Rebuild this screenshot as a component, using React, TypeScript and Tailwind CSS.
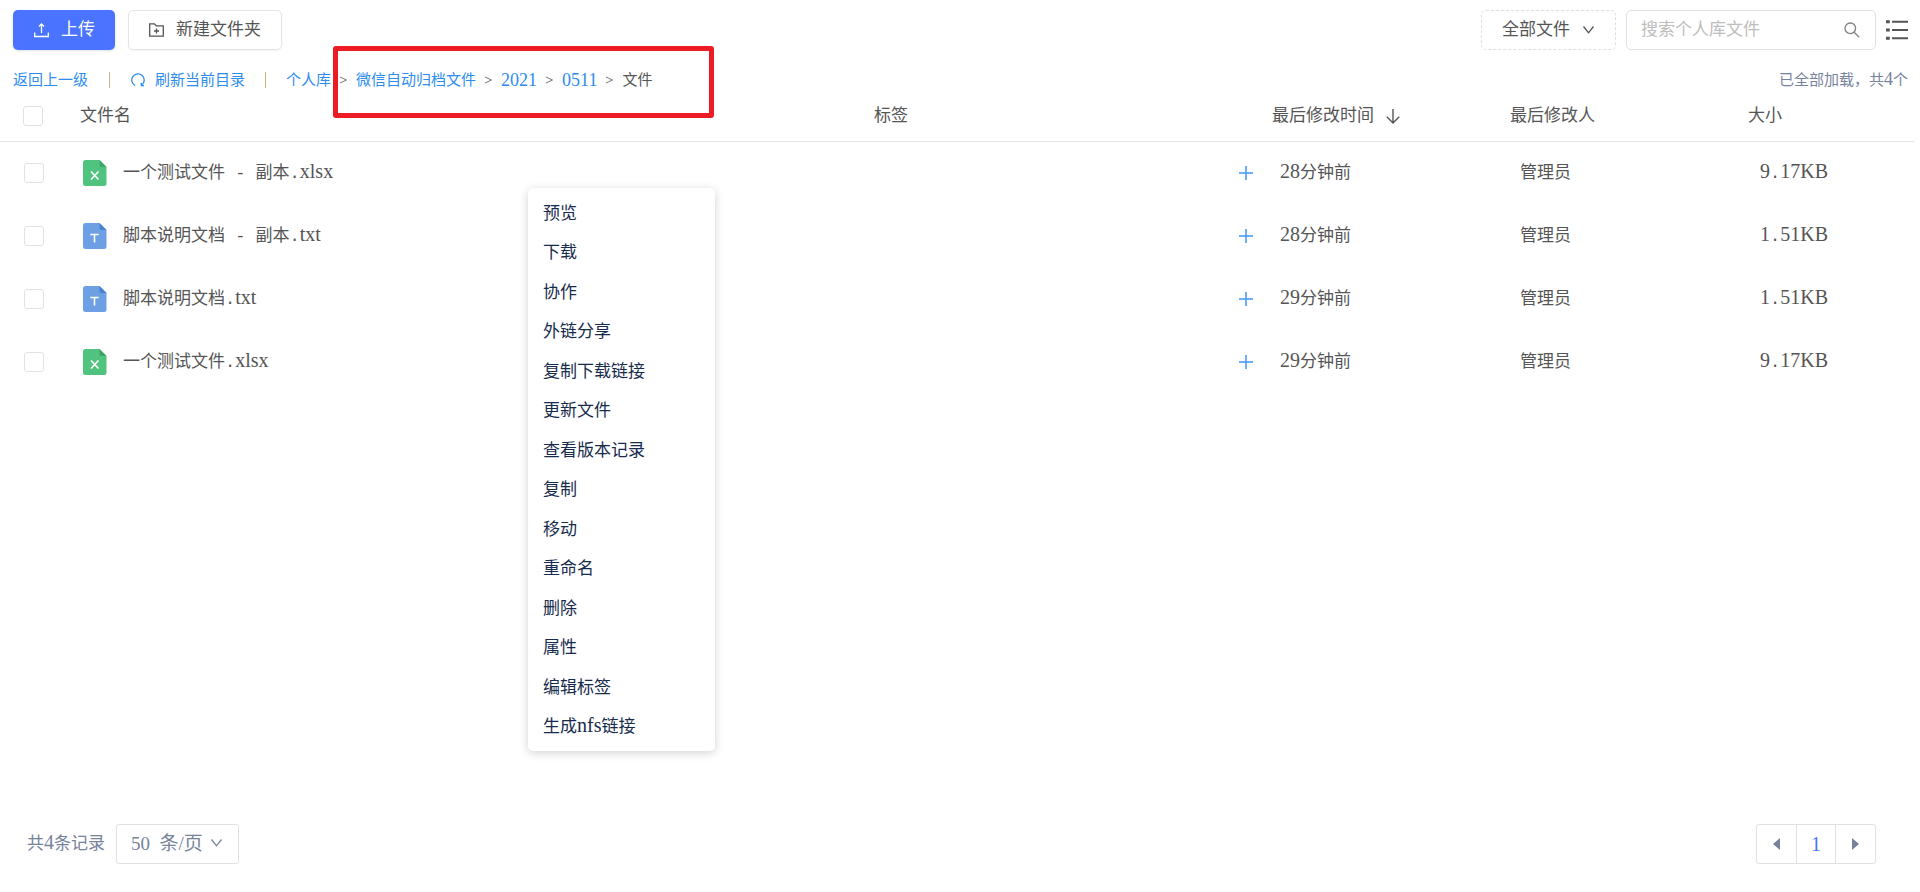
import { ReactNode } from "react";

type FileKind = "xlsx" | "txt";

type FileRow = {
  name: string;
  kind: FileKind;
  modified: string;
  owner: string;
  size: string;
};

const files: FileRow[] = [
  { name: "一个测试文件 - 副本.xlsx", kind: "xlsx", modified: "28分钟前", owner: "管理员", size: "9.17KB" },
  { name: "脚本说明文档 - 副本.txt", kind: "txt", modified: "28分钟前", owner: "管理员", size: "1.51KB" },
  { name: "脚本说明文档.txt", kind: "txt", modified: "29分钟前", owner: "管理员", size: "1.51KB" },
  { name: "一个测试文件.xlsx", kind: "xlsx", modified: "29分钟前", owner: "管理员", size: "9.17KB" },
];

const menuItems = [
  "预览",
  "下载",
  "协作",
  "外链分享",
  "复制下载链接",
  "更新文件",
  "查看版本记录",
  "复制",
  "移动",
  "重命名",
  "删除",
  "属性",
  "编辑标签",
  "生成nfs链接",
];

// Latin runs are set a little larger than the Chinese, spaces and dots are full cells
function Mixed({ children }: { children: string }) {
  const parts = children.split(/([A-Za-z0-9]+|[ .-]+)/).filter(Boolean);
  return (
    <>
      {parts.map((part, i) => {
        if (/^[A-Za-z0-9]/.test(part)) {
          return <span key={i} className="text-xl leading-none">{part}</span>;
        }
        if (/^[ .-]/.test(part)) {
          return <span key={i} className="font-['Liberation_Mono',monospace] whitespace-pre leading-none">{part}</span>;
        }
        return part;
      })}
    </>
  );
}

function FileIcon({ kind }: { kind: FileKind }) {
  const xlsx = kind === "xlsx";
  return (
    <svg width="24" height="26" viewBox="0 0 24 26" className="shrink-0" aria-hidden="true">
      <path d="M2.5 0H16.5L23.5 7V23.5A2.5 2.5 0 0 1 21 26H2.5A2.5 2.5 0 0 1 0 23.5V2.5A2.5 2.5 0 0 1 2.5 0Z" fill={xlsx ? "#50c37e" : "#6c9fe4"} />
      <path d="M16.5 0L23.5 7H18.5A2 2 0 0 1 16.5 5Z" fill={xlsx ? "#3ca467" : "#4a80cd"} />
      {xlsx ? (
        <path d="M8 11.5L15.5 19.5M15.5 11.5L8 19.5" stroke="#fff" strokeWidth="1.7" fill="none" />
      ) : (
        <path d="M7.3 11.5H15.7M11.5 11.5V19.5" stroke="#fff" strokeWidth="1.6" fill="none" />
      )}
    </svg>
  );
}

function Chevron({ className }: { className?: string }) {
  return (
    <svg width="13" height="10" viewBox="0 0 13 10" fill="none" stroke="currentColor" strokeWidth="1.3" className={className} aria-hidden="true">
      <path d="M1.5 1.5L6.5 7.8L11.5 1.5" />
    </svg>
  );
}

function Checkbox({ label }: { label: string }) {
  return (
    <input
      type="checkbox"
      aria-label={label}
      className="block size-5 appearance-none rounded-[3px] border border-[#e0e2e6] bg-white"
    />
  );
}

function Crumb({ children }: { children: ReactNode }) {
  return <a href="#" className="text-[#2d8cf0]">{children}</a>;
}

function Arrow() {
  return (
    <svg width="9" height="8" viewBox="0 0 9 8" fill="none" stroke="#777" strokeWidth="1" className="mx-2" aria-hidden="true">
      <path d="M1 1L7.5 4L1 7" />
    </svg>
  );
}

export default function App() {
  return (
    <div className="relative flex min-h-screen flex-col bg-white font-['Liberation_Serif','Noto_Sans_CJK_SC',serif] text-[17px] leading-6 text-[#555]">
      <header className="flex items-center justify-between pt-[10px] pr-3 pl-[13px]">
        <div className="flex gap-[13px]">
          <button className="flex h-10 items-center gap-3 rounded-[5px] bg-[#4a74ff] pr-5 pl-[21px] text-white shadow-sm">
            <svg width="15" height="15" viewBox="0 0 15 15" fill="none" stroke="currentColor" strokeWidth="1.3" aria-hidden="true">
              <path d="M0.7 9.5V13.5H14.3V9.5M7.5 10V1M5 3.5L7.5 1L10 3.5" />
            </svg>
            上传
          </button>
          <button className="flex h-10 items-center gap-3 rounded-[5px] border border-[#e2e4e8] px-5 shadow-xs">
            <svg width="15" height="14" viewBox="0 0 15 14" fill="none" stroke="currentColor" strokeWidth="1.3" aria-hidden="true">
              <path d="M0.7 0.8H5.5L7.2 2.9H14.3V13.2H0.7ZM7.5 5.5V10.5M5 8H10" />
            </svg>
            新建文件夹
          </button>
        </div>
        <div className="flex items-center">
          <button className="flex h-10 w-[135px] items-center justify-center gap-3 rounded-[5px] border border-dashed border-[#dcdfe3]">
            全部文件
            <Chevron />
          </button>
          <label className="ml-[10px] flex h-10 w-[250px] items-center rounded-[5px] border border-[#dfe1e5] pr-[15px] pl-[14px]">
            <input type="text" aria-label="搜索个人库文件" placeholder="搜索个人库文件" className="h-8 min-w-0 flex-1 outline-none placeholder:text-[#bdbdbd]" />
            <svg width="16" height="16" viewBox="0 0 16 16" fill="none" stroke="#808080" strokeWidth="1.3" aria-hidden="true">
              <circle cx="6.3" cy="6.3" r="5.3" />
              <path d="M10.2 10.2L15.2 15.2" />
            </svg>
          </label>
          <button aria-label="列表视图" className="ml-[10px] text-[#555]">
            <svg width="22" height="20" viewBox="0 0 22 20" fill="currentColor" aria-hidden="true">
              <path d="M0 0.3H3.8V3.3H0ZM6 0.8H22V2.8H6ZM0 8.5H3.8V11.5H0ZM6 9H22V11H6ZM0 16.7H3.8V19.7H0ZM6 17.2H22V19.2H6Z" />
            </svg>
          </button>
        </div>
      </header>

      <div className="mt-[18px] flex h-6 items-center justify-between pr-3 pl-[13px] text-[15px]">
        <nav aria-label="当前位置" className="flex items-center">
          <Crumb>返回上一级</Crumb>
          <span className="mx-[21px] h-4 w-px bg-[#d3ae7c]" />
          <a href="#" className="flex items-center gap-[10px] text-[#2d8cf0]">
            <svg width="14" height="14" viewBox="0 0 14 14" fill="none" stroke="currentColor" strokeWidth="1.3" aria-hidden="true">
              <path d="M4.2 12.6A6.2 6.2 0 1 1 11 11.8M10.3 9.8V12.6H13" />
            </svg>
            刷新当前目录
          </a>
          <span className="mx-5 h-4 w-px bg-[#d3ae7c]" />
          <Crumb>个人库</Crumb>
          <div className="relative flex items-center">
            <Arrow />
            <Crumb>微信自动归档文件</Crumb>
            <Arrow />
            <Crumb><span className="text-lg">2021</span></Crumb>
            <Arrow />
            <Crumb><span className="text-lg">0511</span></Crumb>
            <Arrow />
            <span aria-current="page">文件</span>
            <div className="pointer-events-none absolute -top-5 left-0.5 h-[72px] w-[381px] rounded-[3px] border-5 border-[#ed1c24]" />
          </div>
        </nav>
        <span className="text-[#76839b]">已全部加载，共<span className="text-lg leading-none">4</span>个</span>
      </div>

      <main className="pr-[6px]">
        <table className="w-full table-fixed border-collapse text-left">
          <colgroup>
            <col className="w-20" />
            <col />
            <col className="w-[398px]" />
            <col className="w-[238px]" />
            <col className="w-[238px]" />
            <col className="w-[166px]" />
          </colgroup>
          <thead>
            <tr className="h-[49px] border-b border-[#e2e4e8] [&>th]:p-0 [&>th]:font-normal">
              <th><div className="pl-[23px]"><Checkbox label="全选" /></div></th>
              <th>文件名</th>
              <th>标签</th>
              <th>
                <button className="flex items-center gap-3">
                  最后修改时间
                  <svg width="14" height="15" viewBox="0 0 14 15" fill="none" stroke="currentColor" strokeWidth="1.4" aria-hidden="true">
                    <path d="M7 0V14M0.8 7.8L7 14L13.2 7.8" />
                  </svg>
                </button>
              </th>
              <th>最后修改人</th>
              <th>大小</th>
            </tr>
          </thead>
          <tbody>
            {files.map((file) => (
              <tr key={file.name} className="h-[63px]">
                <td className="p-0 pl-6"><Checkbox label={file.name} /></td>
                <td className="p-0 pl-[3px]">
                  <div className="flex items-center gap-4">
                    <FileIcon kind={file.kind} />
                    <span className="whitespace-nowrap"><Mixed>{file.name}</Mixed></span>
                  </div>
                </td>
                <td className="p-0 pr-[19px]">
                  <button aria-label="添加标签" className="ml-auto block">
                    <svg width="14" height="14" viewBox="0 0 14 14" fill="none" stroke="#3f97f5" strokeWidth="1.5" aria-hidden="true">
                      <path d="M7 0V14M0 7H14" />
                    </svg>
                  </button>
                </td>
                <td className="p-0 pl-2"><Mixed>{file.modified}</Mixed></td>
                <td className="p-0 pl-2.5">{file.owner}</td>
                <td className="p-0 pl-3"><Mixed>{file.size}</Mixed></td>
              </tr>
            ))}
          </tbody>
        </table>
      </main>

      <footer className="mt-auto flex items-center justify-between pr-11 pb-7 pl-[27px] text-[#76839b]">
        <div className="flex items-center gap-[11px]">
          <span><Mixed>共4条记录</Mixed></span>
          <div className="relative">
            <select aria-label="每页条数" className="h-10 w-[123px] appearance-none rounded-[3px] border border-[#dfe1e5] bg-white pl-[14px] text-[19px]">
              <option>50&#8194;条/页</option>
            </select>
            <Chevron className="pointer-events-none absolute top-[14px] right-4" />
          </div>
        </div>
        <div className="flex h-10 w-[120px] divide-x divide-[#dfe1e5] rounded-[3px] border border-[#dfe1e5]">
          <button aria-label="上一页" className="flex flex-1 items-center justify-center">
            <svg width="7" height="12" viewBox="0 0 7 12" fill="currentColor" aria-hidden="true"><path d="M7 0V12L0 6Z" /></svg>
          </button>
          <button className="flex-1 text-xl text-[#4a74ff]">1</button>
          <button aria-label="下一页" className="flex flex-1 items-center justify-center">
            <svg width="7" height="12" viewBox="0 0 7 12" fill="currentColor" aria-hidden="true"><path d="M0 0V12L7 6Z" /></svg>
          </button>
        </div>
      </footer>

      <div role="menu" className="absolute top-[188px] left-[528px] flex h-[563px] w-[187px] flex-col rounded-[5px] bg-white pt-[6px] pb-1 text-[#172b4d] shadow-[0_2px_10px_rgba(0,0,0,0.18)]">
        {menuItems.map((item) => (
          <button key={item} role="menuitem" className="flex-1 px-[15px] text-left hover:bg-gray-100">
            <Mixed>{item}</Mixed>
          </button>
        ))}
      </div>
    </div>
  );
}
